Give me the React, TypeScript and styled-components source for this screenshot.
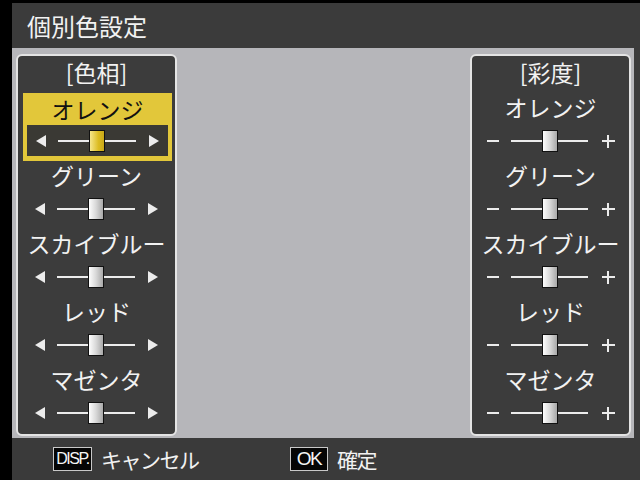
import React from "react";
import styled, { createGlobalStyle } from "styled-components";

const Global = createGlobalStyle`
  html, body { margin: 0; padding: 0; background: #000; }
  body { width: 640px; height: 480px; overflow: hidden; }
`;

const Screen = styled.div`
  width: 640px;
  height: 480px;
  box-sizing: border-box;
  padding: 3px 0 0 12px;
  background: #000;
  display: flex;
  flex-direction: column;
  font-family: "Noto Sans CJK JP", "Noto Sans", sans-serif;
  color: #f2f2f2;
`;

const Header = styled.header`
  height: 45px;
  flex: none;
  background: #3b3b3b;
  display: flex;
  align-items: center;
  padding-left: 15px;
  font-size: 24px;
  line-height: 1;
`;

const Body = styled.main`
  height: 390px;
  flex: none;
  box-sizing: border-box;
  background: #b6b6ba;
  border-right: 6px solid #3b3b3b;
  display: flex;
  justify-content: space-between;
  padding: 6px 3px 2px 4px;
`;

const Panel = styled.section`
  width: 161px;
  height: 382px;
  box-sizing: border-box;
  border: 2px solid #e4e4e4;
  border-radius: 6px;
  background: #3c3c3c;
  display: flex;
  flex-direction: column;
`;

const PanelTitle = styled.div`
  height: 35px;
  flex: none;
  display: flex;
  align-items: center;
  justify-content: center;
  font-size: 23px;
  line-height: 1;
  padding-bottom: 3px;
  box-sizing: border-box;
`;

const Item = styled.div<{ $selected?: boolean }>`
  height: 68px;
  flex: none;
  display: flex;
  flex-direction: column;
  box-sizing: border-box;
  ${(p) =>
    p.$selected
      ? `
    background: #e2c73a;
    margin: 2px 3px -2px 5px;
    padding: 0 4px 5px;
    color: #111;
  `
      : ``}
`;

const Label = styled.div`
  height: 32px;
  flex: none;
  display: flex;
  align-items: center;
  justify-content: center;
  font-size: 23px;
  line-height: 1;
  white-space: nowrap;
`;

const SliderRow = styled.div<{ $selected?: boolean }>`
  flex: 1;
  display: flex;
  align-items: center;
  justify-content: center;
  background: ${(p) => (p.$selected ? "#3a3934" : "transparent")};
`;

const Arrow = styled.span<{ $dir: "left" | "right" }>`
  width: 0;
  height: 0;
  border-top: 6px solid transparent;
  border-bottom: 6px solid transparent;
  ${(p) =>
    p.$dir === "left"
      ? "border-right: 10px solid #ececec; margin-right: 12px;"
      : "border-left: 10px solid #ececec; margin-left: 13px;"}
`;

const Minus = styled.span`
  width: 12px;
  height: 2px;
  background: #ececec;
  margin-right: 12px;
`;

const Plus = styled.span`
  width: 13px;
  height: 13px;
  margin-left: 14px;
  position: relative;
  &::before,
  &::after {
    content: "";
    position: absolute;
    background: #ececec;
  }
  &::before { left: 0; right: 0; top: 5.5px; height: 2px; }
  &::after { top: 0; bottom: 0; left: 5.5px; width: 2px; }
`;

const Track = styled.div`
  display: flex;
  align-items: center;
`;

const Line = styled.span<{ $w: number }>`
  width: ${(p) => p.$w}px;
  height: 2px;
  background: #ececec;
`;

const Thumb = styled.span<{ $selected?: boolean }>`
  width: 16px;
  height: 22px;
  box-sizing: border-box;
  border: 1px solid #111;
  background: ${(p) =>
    p.$selected
      ? "linear-gradient(to right, #f6e68a, #dcbc22 60%, #c9a818)"
      : "linear-gradient(to right, #fdfdfd, #d8d8d8 50%, #a8a8a8)"};
`;

const Footer = styled.footer`
  flex: 1;
  background: #3a3a3a;
  display: flex;
  align-items: center;
  padding-left: 41px;
`;

const FooterGroup = styled.div<{ $w?: number }>`
  display: flex;
  align-items: center;
  gap: 9px;
  width: ${(p) => (p.$w ? `${p.$w}px` : "auto")};
`;

const Badge = styled.span<{ $w: number; $size: number }>`
  width: ${(p) => p.$w}px;
  height: 24px;
  box-sizing: border-box;
  border: 1px solid #c8c8c8;
  background: #050505;
  display: flex;
  align-items: center;
  justify-content: center;
  font-family: "Liberation Sans", Arial, sans-serif;
  font-size: ${(p) => p.$size}px;
  letter-spacing: -1.4px;
  color: #f4f4f4;
  white-space: nowrap;
`;

const FooterText = styled.span`
  font-size: 21px;
  line-height: 1;
  letter-spacing: -1.5px;
`;

const colors = ["オレンジ", "グリーン", "スカイブルー", "レッド", "マゼンタ"];

const HueSlider = ({ selected }: { selected?: boolean }) => (
  <SliderRow $selected={selected}>
    <Arrow $dir="left" />
    <Track>
      <Line $w={31} />
      <Thumb $selected={selected} />
      <Line $w={31} />
    </Track>
    <Arrow $dir="right" />
  </SliderRow>
);

const SatSlider = () => (
  <SliderRow>
    <Minus />
    <Track>
      <Line $w={31} />
      <Thumb />
      <Line $w={30} />
    </Track>
    <Plus />
  </SliderRow>
);

export default function App() {
  return (
    <>
      <Global />
      <Screen>
        <Header>個別色設定</Header>
        <Body>
          <Panel>
            <PanelTitle>[色相]</PanelTitle>
            {colors.map((c, i) => (
              <Item key={c} $selected={i === 0}>
                <Label>{c}</Label>
                <HueSlider selected={i === 0} />
              </Item>
            ))}
          </Panel>
          <Panel>
            <PanelTitle>[彩度]</PanelTitle>
            {colors.map((c) => (
              <Item key={c}>
                <Label>{c}</Label>
                <SatSlider />
              </Item>
            ))}
          </Panel>
        </Body>
        <Footer>
          <FooterGroup $w={237}>
            <Badge $w={39} $size={16}>DISP.</Badge>
            <FooterText>キャンセル</FooterText>
          </FooterGroup>
          <FooterGroup>
            <Badge $w={38} $size={19}>OK</Badge>
            <FooterText>確定</FooterText>
          </FooterGroup>
        </Footer>
      </Screen>
    </>
  );
}
